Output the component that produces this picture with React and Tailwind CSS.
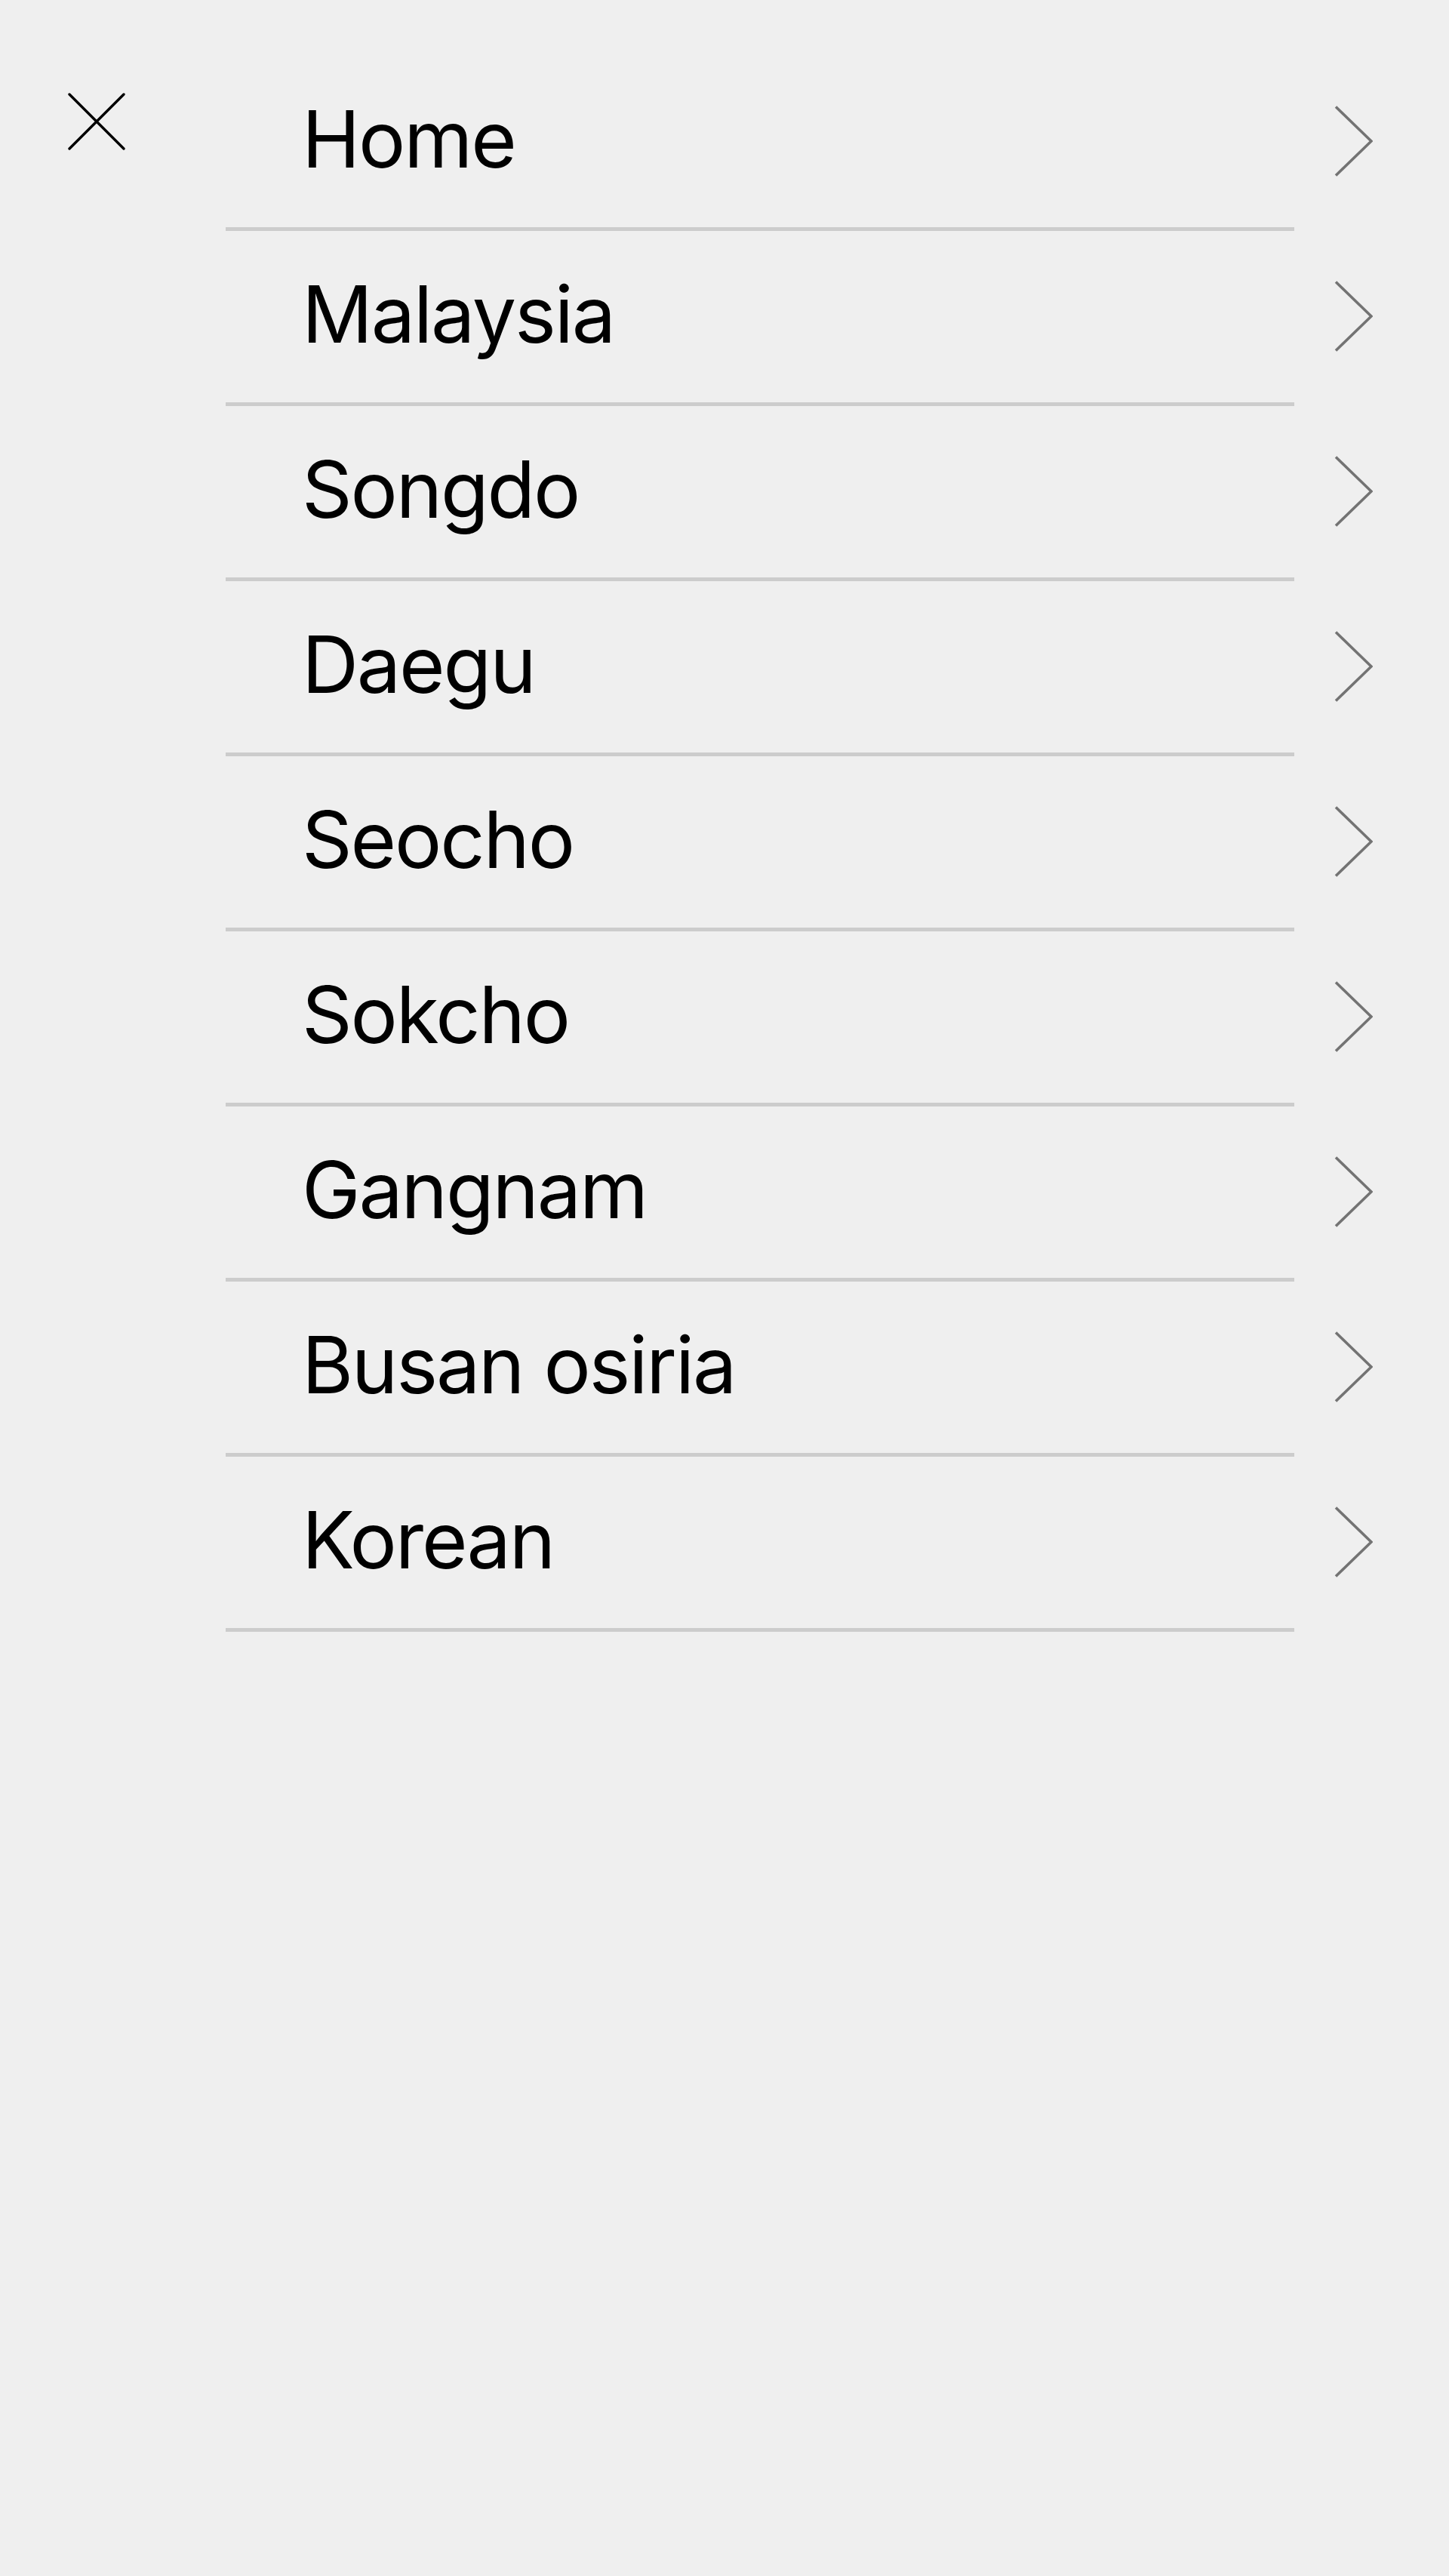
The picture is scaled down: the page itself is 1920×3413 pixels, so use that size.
const items = [
  "Home",
  "Malaysia",
  "Songdo",
  "Daegu",
  "Seocho",
  "Sokcho",
  "Gangnam",
  "Busan osiria",
  "Korean",
];

const CloseIcon = () => (
  <svg width="76" height="76" viewBox="0 0 76 76" fill="none">
    <path
      d="M2 2L74 74M74 2L2 74"
      stroke="#000"
      strokeWidth="3.4"
      strokeLinecap="round"
    />
  </svg>
);

const Chevron = () => (
  <svg width="52" height="96" viewBox="0 0 52 96" fill="none">
    <polyline
      points="3,2.5 50,48 3,93.5"
      stroke="#737373"
      strokeWidth="3.6"
      fill="none"
    />
  </svg>
);

const App = () => {
  return (
    <div
      className="min-h-screen w-full bg-[#efefef] flex"
      style={{ fontFamily: "Inter, 'Noto Sans', sans-serif" }}
    >
      <div className="w-[299px] shrink-0 pt-[123px] pl-[90px]">
        <button type="button" className="block cursor-pointer">
          <CloseIcon />
        </button>
      </div>

      <ul className="pt-[74px]">
        {items.map((item) => (
          <li key={item} className="flex h-[232px]">
            <a
              href="#"
              className="w-[1416px] flex items-center pl-[101px] pb-[8px] border-b-[5px] border-[#cccccc] text-[104px] leading-none tracking-[-0.021em] text-black"
            >
              {item}
            </a>
            <div className="ml-[52px] flex items-center pb-[6px]">
              <Chevron />
            </div>
          </li>
        ))}
      </ul>
    </div>
  );
};

export default App;
